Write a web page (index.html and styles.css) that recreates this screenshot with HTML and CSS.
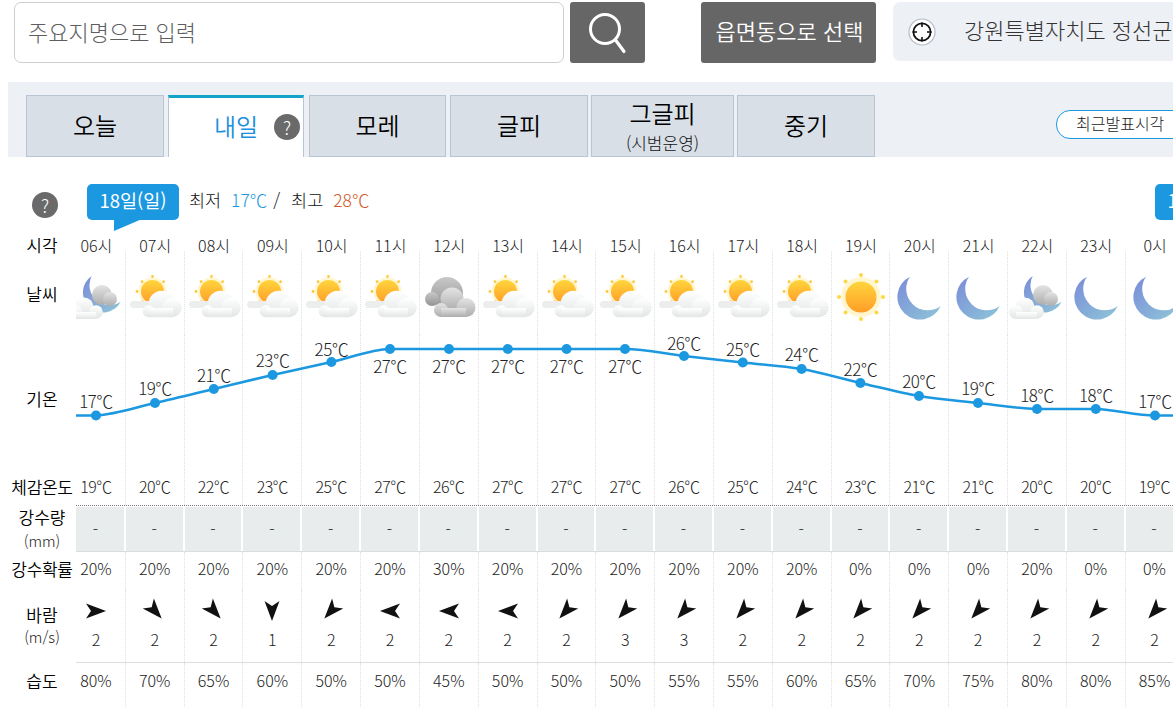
FILE: index.html
```html
<!DOCTYPE html>
<html lang="ko">
<head>
<meta charset="utf-8">
<title>날씨</title>
<link rel="stylesheet" href="styles.css">
</head>
<body>
<svg class="defs" width="0" height="0" aria-hidden="true">
  <defs>
    <linearGradient id="gSun" x1="0" y1="0" x2="0" y2="1"><stop offset="0" stop-color="#ffd63c"/><stop offset="1" stop-color="#ff9d28"/></linearGradient>
    <linearGradient id="gCloud" x1="0" y1="0" x2="0" y2="1"><stop offset="0" stop-color="#ffffff"/><stop offset="1" stop-color="#e2e5e5"/></linearGradient>
    <linearGradient id="gGrey" x1="0" y1="0" x2="0" y2="1"><stop offset="0" stop-color="#e4e4e4"/><stop offset="1" stop-color="#adadad"/></linearGradient>
    <linearGradient id="gBack" x1="0" y1="0" x2="0" y2="1"><stop offset="0" stop-color="#c8c8c8"/><stop offset="1" stop-color="#939393"/></linearGradient>
    <linearGradient id="gMoon" x1="0" y1="0" x2="1" y2="1"><stop offset="0" stop-color="#7a8cd8"/><stop offset="1" stop-color="#8fc6d8"/></linearGradient>
    <symbol id="i-part" viewBox="0 0 58 50">
      <circle cx="26.5" cy="19.5" r="14" fill="#fff6cf"/>
      <circle cx="26.5" cy="19.5" r="11.5" fill="url(#gSun)"/>
      <g fill="#ffc93f"><circle cx="26.5" cy="4.5" r="1.4"/><circle cx="37.6" cy="9.7" r="1.4"/><circle cx="16" cy="9.7" r="1.4"/><circle cx="11" cy="19.5" r="1.4"/><circle cx="16.7" cy="29.7" r="1.4"/></g>
      <rect x="4" y="29" width="24" height="7" rx="3.5" fill="#eceeee"/>
      <g fill="url(#gCloud)"><circle cx="35.7" cy="31.7" r="13"/><circle cx="46" cy="35.5" r="9.7"/><circle cx="22.7" cy="39.2" r="6"/><rect x="23" y="36" width="24" height="9.2"/></g>
    </symbol>
    <symbol id="i-dark" viewBox="0 0 58 50">
      <g fill="url(#gBack)"><circle cx="27" cy="21" r="16"/><circle cx="12" cy="27" r="7"/></g>
      <g fill="url(#gGrey)"><circle cx="32" cy="27" r="11.5"/><circle cx="46" cy="35.5" r="9.5"/><circle cx="21" cy="38" r="7"/><rect x="21" y="36" width="25" height="9"/></g>
    </symbol>
    <symbol id="i-sun" viewBox="0 0 58 50">
      <circle cx="29" cy="25" r="20" fill="#fff6cf"/>
      <circle cx="29" cy="25" r="15.5" fill="url(#gSun)"/>
      <g fill="#ffd740"><circle cx="29" cy="3" r="2"/><circle cx="29" cy="47" r="2"/><circle cx="7" cy="25" r="2"/><circle cx="51" cy="25" r="2"/><circle cx="13.5" cy="9.5" r="2"/><circle cx="44.5" cy="9.5" r="2"/><circle cx="13.5" cy="40.5" r="2"/><circle cx="44.5" cy="40.5" r="2"/></g>
    </symbol>
    <symbol id="i-moon" viewBox="0 0 58 50">
      <path d="M20 4.7A22.6 22.6 0 1 0 50.7 34A21.5 21.5 0 0 1 20 4.7Z" fill="url(#gMoon)"/>
    </symbol>
    <symbol id="i-mooncloud" viewBox="0 0 58 50">
      <path d="M24.7 4A20 20 0 1 0 53.7 29.7A20 20 0 0 1 24.7 4Z" fill="url(#gMoon)"/>
      <g fill="url(#gGrey)"><circle cx="35" cy="23" r="10"/><circle cx="43" cy="27" r="7"/></g>
      <g fill="url(#gCloud)"><circle cx="17" cy="35" r="9.5"/><circle cx="29" cy="40" r="6.8"/><circle cx="8" cy="40" r="7"/><rect x="8" y="40" width="21" height="7"/></g>
    </symbol>
    <symbol id="i-wind" viewBox="-11 -11 22 22">
      <path d="M10 0L-10 -7.5L-5 0L-10 7.5Z" fill="#111"/>
    </symbol>
  </defs>
</svg>

<header class="top">
  <input class="search" type="text" placeholder="주요지명으로 입력">
  <button class="btn-search" type="button" aria-label="검색">
    <svg width="44" height="46" viewBox="0 0 44 46"><circle cx="19" cy="19" r="14.5" fill="none" stroke="#fff" stroke-width="3"/><path d="M29.5 30L38 41.5" stroke="#fff" stroke-width="3.2" stroke-linecap="round"/></svg>
  </button>
  <button class="btn-town" type="button">읍면동으로 선택</button>
  <div class="loc">
    <svg class="loc-icon" width="28" height="28" viewBox="0 0 28 28"><circle cx="14" cy="14" r="13" fill="#fff" stroke="#b4bcc6" stroke-width="1.2"/><circle cx="14" cy="14" r="8.6" fill="none" stroke="#111" stroke-width="1.8"/><path d="M14 4.5V9M14 19V23.5M4.5 14H9M19 14H23.5" stroke="#111" stroke-width="1.6"/></svg>
    <span class="loc-name">강원특별자치도 정선군</span>
  </div>
</header>

<nav class="tabs">
  <a class="tab">오늘</a>
  <a class="tab tab-on">내일<span class="help help-tab">?</span></a>
  <a class="tab tab-after">모레</a>
  <a class="tab">글피</a>
  <a class="tab tab-two">그글피<small>(시범운영)</small></a>
  <a class="tab tab-last">중기</a>
  <span class="pill">최근발표시각</span>
</nav>

<section class="dates">
  <span class="help help-date">?</span>
  <span class="bubble">18일(일)</span>
  <span class="minmax">최저 <b class="cold">17℃</b> / <span class="max">최고</span> <b class="hot">28℃</b></span>
  <span class="bubble bubble-next">19일(월)</span>
</section>

<section class="table">
  <div class="row r-time">
    <div class="lab">시각</div>
    <div class="cells">
      <div class="c">06시</div><div class="c">07시</div><div class="c">08시</div><div class="c">09시</div><div class="c">10시</div><div class="c">11시</div><div class="c">12시</div><div class="c">13시</div><div class="c">14시</div><div class="c">15시</div><div class="c">16시</div><div class="c">17시</div><div class="c">18시</div><div class="c">19시</div><div class="c">20시</div><div class="c">21시</div><div class="c">22시</div><div class="c">23시</div><div class="c">0시</div>
    </div>
  </div>

  <div class="row r-icon">
    <div class="lab lab-icon">날씨</div>
    <div class="cells">
      <div class="c"><svg class="wx"><use href="#i-mooncloud"/></svg></div>
      <div class="c"><svg class="wx"><use href="#i-part"/></svg></div>
      <div class="c"><svg class="wx"><use href="#i-part"/></svg></div>
      <div class="c"><svg class="wx"><use href="#i-part"/></svg></div>
      <div class="c"><svg class="wx"><use href="#i-part"/></svg></div>
      <div class="c"><svg class="wx"><use href="#i-part"/></svg></div>
      <div class="c"><svg class="wx"><use href="#i-dark"/></svg></div>
      <div class="c"><svg class="wx"><use href="#i-part"/></svg></div>
      <div class="c"><svg class="wx"><use href="#i-part"/></svg></div>
      <div class="c"><svg class="wx"><use href="#i-part"/></svg></div>
      <div class="c"><svg class="wx"><use href="#i-part"/></svg></div>
      <div class="c"><svg class="wx"><use href="#i-part"/></svg></div>
      <div class="c"><svg class="wx"><use href="#i-part"/></svg></div>
      <div class="c"><svg class="wx"><use href="#i-sun"/></svg></div>
      <div class="c"><svg class="wx"><use href="#i-moon"/></svg></div>
      <div class="c"><svg class="wx"><use href="#i-moon"/></svg></div>
      <div class="c"><svg class="wx"><use href="#i-mooncloud"/></svg></div>
      <div class="c"><svg class="wx"><use href="#i-moon"/></svg></div>
      <div class="c"><svg class="wx"><use href="#i-moon"/></svg></div>
    </div>
  </div>

  <div class="row r-chart">
    <div class="lab lab-chart">기온</div>
    <div class="cells">
      <div class="c"></div><div class="c"></div><div class="c"></div><div class="c"></div><div class="c"></div><div class="c"></div><div class="c"></div><div class="c"></div><div class="c"></div><div class="c"></div><div class="c"></div><div class="c"></div><div class="c"></div><div class="c"></div><div class="c"></div><div class="c"></div><div class="c"></div><div class="c"></div><div class="c"></div>
      <svg class="chart" viewBox="76 335 1097 135" width="1097" height="135">
        <path class="line" d="M76 415.5L96 415.5C115.6 414.5 135.4 407.4 155 403C174.6 398.6 194.2 393.7 213.8 389C233.4 384.3 253 379.5 272.6 375C292.2 370.5 311.8 366.3 331.4 362C351 357.7 370.4 349.5 390 349L625 349C644.6 349 664.4 353.75 684 356C703.6 358.25 723.2 360.3 742.8 362.5C762.4 364.7 782 365.6 801.6 369C821.2 372.4 840.8 378.5 860.4 383C880 387.5 899.4 392.7 919 396C938.6 399.3 958.4 400.8 978 403C997.6 405.2 1017.4 408.5 1037 409L1095.8 409C1115.4 409.5 1135.4 415.5 1155 415.5L1173 415.5"/>
        <g class="dots">
          <circle cx="96" cy="415.5" r="5"/><circle cx="155" cy="403" r="5"/><circle cx="213.8" cy="389" r="5"/><circle cx="272.6" cy="375" r="5"/><circle cx="331.4" cy="362" r="5"/><circle cx="390" cy="349" r="5"/><circle cx="449" cy="349" r="5"/><circle cx="507.8" cy="349" r="5"/><circle cx="566.6" cy="349" r="5"/><circle cx="625" cy="349" r="5"/><circle cx="684" cy="356" r="5"/><circle cx="742.8" cy="362.5" r="5"/><circle cx="801.6" cy="369" r="5"/><circle cx="860.4" cy="383" r="5"/><circle cx="919" cy="396" r="5"/><circle cx="978" cy="403" r="5"/><circle cx="1037" cy="409" r="5"/><circle cx="1095.8" cy="409" r="5"/><circle cx="1155" cy="415.5" r="5"/>
        </g>
        <g class="temps">
          <text x="96" y="408">17℃</text><text x="155" y="395">19℃</text><text x="213.8" y="382">21℃</text><text x="272.6" y="367">23℃</text><text x="331.4" y="356">25℃</text><text x="390" y="373">27℃</text><text x="449" y="373">27℃</text><text x="507.8" y="373">27℃</text><text x="566.6" y="373">27℃</text><text x="625" y="373">27℃</text><text x="684" y="350">26℃</text><text x="742.8" y="356">25℃</text><text x="801.6" y="361">24℃</text><text x="860.4" y="376">22℃</text><text x="919" y="388">20℃</text><text x="978" y="395">19℃</text><text x="1037" y="402">18℃</text><text x="1095.8" y="402">18℃</text><text x="1155" y="408">17℃</text>
        </g>
      </svg>
    </div>
  </div>

  <div class="row r-feel">
    <div class="lab">체감온도</div>
    <div class="cells">
      <div class="c">19℃</div><div class="c">20℃</div><div class="c">22℃</div><div class="c">23℃</div><div class="c">25℃</div><div class="c">27℃</div><div class="c">26℃</div><div class="c">27℃</div><div class="c">27℃</div><div class="c">27℃</div><div class="c">26℃</div><div class="c">25℃</div><div class="c">24℃</div><div class="c">23℃</div><div class="c">21℃</div><div class="c">21℃</div><div class="c">20℃</div><div class="c">20℃</div><div class="c">19℃</div>
    </div>
  </div>

  <div class="row r-rain">
    <div class="lab lab-two">강수량<small>(mm)</small></div>
    <div class="cells">
      <div class="c">-</div><div class="c">-</div><div class="c">-</div><div class="c">-</div><div class="c">-</div><div class="c">-</div><div class="c">-</div><div class="c">-</div><div class="c">-</div><div class="c">-</div><div class="c">-</div><div class="c">-</div><div class="c">-</div><div class="c">-</div><div class="c">-</div><div class="c">-</div><div class="c">-</div><div class="c">-</div><div class="c">-</div>
    </div>
  </div>

  <div class="row r-prob">
    <div class="lab">강수확률</div>
    <div class="cells">
      <div class="c">20%</div><div class="c">20%</div><div class="c">20%</div><div class="c">20%</div><div class="c">20%</div><div class="c">20%</div><div class="c">30%</div><div class="c">20%</div><div class="c">20%</div><div class="c">20%</div><div class="c">20%</div><div class="c">20%</div><div class="c">20%</div><div class="c">0%</div><div class="c">0%</div><div class="c">0%</div><div class="c">20%</div><div class="c">0%</div><div class="c">0%</div>
    </div>
  </div>

  <div class="row r-wind">
    <div class="lab lab-two lab-wind">바람<small>(m/s)</small></div>
    <div class="cells">
      <div class="c"><svg class="arrow" style="transform:rotate(0deg)"><use href="#i-wind"/></svg>2</div>
      <div class="c"><svg class="arrow" style="transform:rotate(48deg)"><use href="#i-wind"/></svg>2</div>
      <div class="c"><svg class="arrow" style="transform:rotate(48deg)"><use href="#i-wind"/></svg>2</div>
      <div class="c"><svg class="arrow" style="transform:rotate(90deg)"><use href="#i-wind"/></svg>1</div>
      <div class="c"><svg class="arrow" style="transform:rotate(132deg)"><use href="#i-wind"/></svg>2</div>
      <div class="c"><svg class="arrow" style="transform:rotate(180deg)"><use href="#i-wind"/></svg>2</div>
      <div class="c"><svg class="arrow" style="transform:rotate(180deg)"><use href="#i-wind"/></svg>2</div>
      <div class="c"><svg class="arrow" style="transform:rotate(180deg)"><use href="#i-wind"/></svg>2</div>
      <div class="c"><svg class="arrow" style="transform:rotate(132deg)"><use href="#i-wind"/></svg>2</div>
      <div class="c"><svg class="arrow" style="transform:rotate(132deg)"><use href="#i-wind"/></svg>3</div>
      <div class="c"><svg class="arrow" style="transform:rotate(132deg)"><use href="#i-wind"/></svg>3</div>
      <div class="c"><svg class="arrow" style="transform:rotate(132deg)"><use href="#i-wind"/></svg>2</div>
      <div class="c"><svg class="arrow" style="transform:rotate(132deg)"><use href="#i-wind"/></svg>2</div>
      <div class="c"><svg class="arrow" style="transform:rotate(132deg)"><use href="#i-wind"/></svg>2</div>
      <div class="c"><svg class="arrow" style="transform:rotate(132deg)"><use href="#i-wind"/></svg>2</div>
      <div class="c"><svg class="arrow" style="transform:rotate(132deg)"><use href="#i-wind"/></svg>2</div>
      <div class="c"><svg class="arrow" style="transform:rotate(132deg)"><use href="#i-wind"/></svg>2</div>
      <div class="c"><svg class="arrow" style="transform:rotate(132deg)"><use href="#i-wind"/></svg>2</div>
      <div class="c"><svg class="arrow" style="transform:rotate(132deg)"><use href="#i-wind"/></svg>2</div>
    </div>
  </div>

  <div class="row r-hum">
    <div class="lab">습도</div>
    <div class="cells">
      <div class="c">80%</div><div class="c">70%</div><div class="c">65%</div><div class="c">60%</div><div class="c">50%</div><div class="c">50%</div><div class="c">45%</div><div class="c">50%</div><div class="c">50%</div><div class="c">50%</div><div class="c">55%</div><div class="c">55%</div><div class="c">60%</div><div class="c">65%</div><div class="c">70%</div><div class="c">75%</div><div class="c">80%</div><div class="c">80%</div><div class="c">85%</div>
    </div>
  </div>
</section>
</body>
</html>
```

FILE: styles.css
```css
* { box-sizing: border-box; }
html, body { margin: 0; height: 707px; overflow: hidden; background: #fff; }
body { width: 1173px; font-family: "Noto Sans CJK KR", "Noto Sans", sans-serif; color: #111; font-weight: 300; }
.defs { position: absolute; }

.top { display: flex; align-items: flex-start; height: 82px; padding: 2px 0 0 14px; white-space: nowrap; }
.search { flex: none; width: 550px; height: 61px; padding: 0 13px 3px; border: 1px solid #ccced2; border-radius: 7px; background: #fff; font: 300 22px "Noto Sans CJK KR", sans-serif; outline: 0; }
.search::placeholder { color: #5e5e5e; opacity: 1; }
.btn-search { flex: none; width: 75px; height: 61px; margin-left: 6px; padding: 0; border: 0; border-radius: 3px; background: #666; display: flex; align-items: center; justify-content: center; }
.btn-town { flex: none; width: 175px; height: 61px; margin-left: 56px; padding: 0 0 6px 2px; border: 0; border-radius: 3px; background: #666; color: #fff; font: 350 22px "Noto Sans CJK KR", sans-serif; }
.loc { flex: none; display: flex; align-items: center; width: 300px; height: 59px; margin-left: 17px; padding-left: 15px; border-radius: 7px; background: #edf0f5; color: #333; }
.loc-icon { flex: none; }
.loc-name { margin: 0 0 6px 28px; font-size: 22px; line-height: 1; }

.tabs { display: flex; align-items: flex-end; gap: 4px; height: 75px; margin-left: 8px; padding-left: 18px; background: #edf0f5; white-space: nowrap; }
.tab { position: relative; flex: none; width: 138px; height: 62px; display: flex; flex-direction: column; align-items: center; justify-content: center; padding-bottom: 3px; border: 1px solid #b8c5d6; background: #d9dfe7; color: #000; font-size: 24px; font-weight: 350; line-height: 1; }
.tab small { margin-top: 9px; font-size: 17px; font-weight: 300; color: #111; }
.tab-on { width: 136px; border-top: 3px solid #12a3c9; border-bottom: 0; background: #fff; color: #1b8fdc; font-weight: 350; padding-bottom: 3px; }
.tab-after { width: 137px; margin-left: 1px; }
.tab-two { width: 143px; margin-left: -1px; padding-bottom: 1px; }
.tab-last { width: 138px; margin-left: -1px; }
.pill { flex: none; width: 160px; height: 29px; margin: 0 0 18px 177px; padding-left: 19px; border: 1px solid #1b98e0; border-radius: 14px; background: #fff; color: #222; font-size: 16px; line-height: 25px; }
.help { display: flex; align-items: center; justify-content: center; width: 26px; height: 26px; border-radius: 50%; background: #6a6a6a; color: #fff; font-size: 18px; font-weight: 300; line-height: 1; }
.help-tab { position: absolute; right: 3px; top: 16px; }

.dates { display: flex; align-items: flex-start; height: 77px; padding: 27px 0 0 32px; white-space: nowrap; }
.help-date { flex: none; margin: 8px 0 0 0; }
.bubble { position: relative; flex: none; width: 92px; height: 36px; margin-left: 29px; border-radius: 5px; background: #1b98e0; color: #fff; font-size: 18.5px; font-weight: 400; line-height: 33px; text-align: center; }
.bubble::after { content: ""; position: absolute; left: 27px; top: 35px; border-right: 28px solid transparent; border-top: 12px solid #1b98e0; }
.minmax { margin: 5px 0 0 10px; font-size: 17.5px; line-height: 22px; color: #111; }
.minmax b { font-weight: 300; margin: 0 5px; font-size: 17.5px; }
.minmax .cold { margin-right: 1px; }
.max { margin-left: 6px; }
.cold { color: #1b98e0; }
.hot { color: #d2592c; }
.bubble-next { margin-left: auto; margin-right: -74px; }

.table { display: block; }
.row { display: flex; }
.lab { position: relative; flex: none; width: 68px; margin-left: 8px; display: flex; flex-direction: column; align-items: center; justify-content: center; font-size: 17px; font-weight: 350; line-height: 1.2; color: #000; white-space: nowrap; }
.lab small { font-size: 15px; font-weight: 300; color: #222; margin-top: 4px; }
.cells { position: relative; flex: none; width: 1097px; display: flex; overflow: hidden; }
.c { position: relative; flex: none; width: 58.82px; border-right: 1px dotted #dfe1e3; text-align: center; font-size: 16px; color: #222; white-space: nowrap; }
.c:first-child { margin-left: -9px; }

.r-time { height: 24px; }
.r-time .cells { height: 24px; }
.r-time .lab { padding-bottom: 2px; }
.r-time .c { border-right: 0; line-height: 22px; }
.r-time .c::after { content: ""; position: absolute; right: 0; bottom: 0; height: 7px; border-right: 1px dotted #dfe1e3; }

.r-icon { height: 77px; }
.lab-icon { padding-bottom: 4px; }
.wx { display: block; width: 58px; height: 50px; margin: 14px 0 0; filter: blur(.35px); }

.r-chart { height: 135px; }
.lab-chart { padding-bottom: 7px; }
.chart { position: absolute; left: 0; top: 0; }
.line { fill: none; stroke: #1b98e0; stroke-width: 2.6; }
.dots { fill: #1b98e0; }
.temps { fill: #222; font-size: 17px; text-anchor: middle; letter-spacing: -.5px; }

.r-feel { height: 35px; }
.r-feel .c { font-size: 16px; line-height: 33px; letter-spacing: -.6px; }
.r-feel .lab { letter-spacing: -.3px; padding-bottom: 1px; }

.r-rain { height: 47px; }
.r-rain .cells { border-top: 1px dotted #777; border-bottom: 1px solid #dadcdd; }
.r-rain .c { margin-top: 1px; border-right: 2px solid #fff; background: #e9ecec; line-height: 45px; }
.lab-two { padding-bottom: 0; }

.r-prob { height: 38px; }
.r-prob .c { line-height: 33px; }
.r-prob .lab { letter-spacing: -.3px; padding-bottom: 4px; }

.r-wind { height: 73px; }
.r-wind .cells { border-bottom: 1px solid #dadcdd; }
.r-wind .c { line-height: 22px; }
.arrow { display: block; width: 22px; height: 22px; margin: 10px auto 6px; }
.lab-wind { padding-bottom: 2px; }
.lab-wind small { margin-top: 3px; }

.r-hum { height: 44px; }
.r-hum .c { line-height: 34px; }
.r-hum .lab { padding-bottom: 7px; }
```
